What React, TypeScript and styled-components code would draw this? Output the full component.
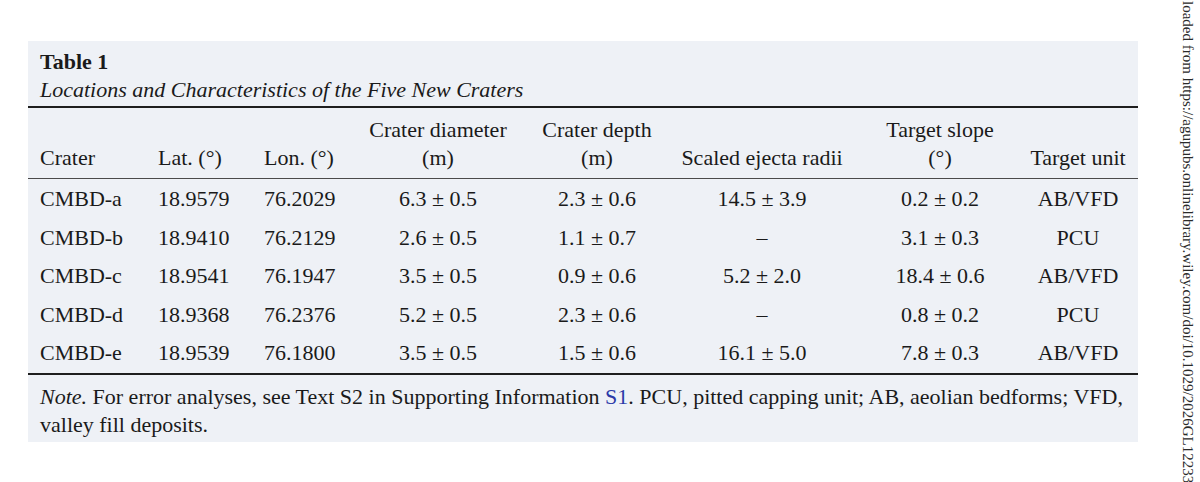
import React from 'react';
import styled, { createGlobalStyle } from 'styled-components';

const GlobalStyle = createGlobalStyle`
  html, body { margin: 0; padding: 0; background: #ffffff; }
  body {
    width: 1200px;
    height: 482px;
    overflow: hidden;
    font-family: "Liberation Serif", "Times New Roman", serif;
    color: #1a1a1a;
  }
`;

const Page = styled.div`
  position: relative;
  width: 1200px;
  height: 482px;
  box-sizing: border-box;
  padding: 41px 0 0 28px;
  overflow: hidden;
`;

const Panel = styled.section`
  width: 1110px;
  box-sizing: border-box;
  background: #eef1f6;
  padding: 7px 0 3px;
  font-size: 22px;
`;

const TitleBlock = styled.header`
  padding: 0 12px 2px;
  line-height: 28px;
  border-bottom: 2.5px solid #1e1e1e;
`;

const TableLabel = styled.div`
  font-weight: bold;
`;

const Caption = styled.div`
  font-style: italic;
`;

const COLS = '118px 106px 96px 156px 162px 168px 188px 88px';

const HeaderRow = styled.div`
  display: grid;
  grid-template-columns: ${COLS};
  align-items: end;
  padding: 8px 16px 6px 12px;
  line-height: 28px;
  border-bottom: 1.5px solid #4a4a4a;
`;

const Body = styled.div`
  padding-top: 1px;
  border-bottom: 2px solid #1e1e1e;
`;

const BodyRow = styled.div`
  display: grid;
  grid-template-columns: ${COLS};
  padding: 0 16px 0 12px;
  line-height: 38.5px;
`;

const Cell = styled.div<{ $center?: boolean }>`
  display: flex;
  flex-direction: column;
  align-items: ${(p) => (p.$center ? 'center' : 'flex-start')};
  text-align: ${(p) => (p.$center ? 'center' : 'left')};
  white-space: nowrap;
`;

const Note = styled.p`
  margin: 0;
  padding: 8px 0 0 12px;
  line-height: 28px;
  white-space: nowrap;
`;

const Em = styled.em`
  font-style: italic;
`;

const Link = styled.span`
  color: #2b3aa8;
`;

const SideNote = styled.div`
  position: absolute;
  top: 1px;
  left: 1179px;
  writing-mode: vertical-rl;
  font-family: "Liberation Serif", "Times New Roman", serif;
  font-size: 15px;
  line-height: 17px;
  color: #2a2a2a;
  white-space: nowrap;
`;

type Row = [string, string, string, string, string, string, string, string];

const rows: Row[] = [
  ['CMBD-a', '18.9579', '76.2029', '6.3 ± 0.5', '2.3 ± 0.6', '14.5 ± 3.9', '0.2 ± 0.2', 'AB/VFD'],
  ['CMBD-b', '18.9410', '76.2129', '2.6 ± 0.5', '1.1 ± 0.7', '–', '3.1 ± 0.3', 'PCU'],
  ['CMBD-c', '18.9541', '76.1947', '3.5 ± 0.5', '0.9 ± 0.6', '5.2 ± 2.0', '18.4 ± 0.6', 'AB/VFD'],
  ['CMBD-d', '18.9368', '76.2376', '5.2 ± 0.5', '2.3 ± 0.6', '–', '0.8 ± 0.2', 'PCU'],
  ['CMBD-e', '18.9539', '76.1800', '3.5 ± 0.5', '1.5 ± 0.6', '16.1 ± 5.0', '7.8 ± 0.3', 'AB/VFD'],
];

const headers: { lines: string[]; center: boolean }[] = [
  { lines: ['Crater'], center: false },
  { lines: ['Lat. (°)'], center: false },
  { lines: ['Lon. (°)'], center: false },
  { lines: ['Crater diameter', '(m)'], center: true },
  { lines: ['Crater depth', '(m)'], center: true },
  { lines: ['Scaled ejecta radii'], center: true },
  { lines: ['Target slope', '(°)'], center: true },
  { lines: ['Target unit'], center: true },
];

export default function App() {
  return (
    <>
      <GlobalStyle />
      <Page>
        <Panel>
          <TitleBlock>
            <TableLabel>Table 1</TableLabel>
            <Caption>Locations and Characteristics of the Five New Craters</Caption>
          </TitleBlock>
          <HeaderRow>
            {headers.map((h, i) => (
              <Cell key={i} $center={h.center}>
                {h.lines.map((l, j) => (
                  <span key={j}>{l}</span>
                ))}
              </Cell>
            ))}
          </HeaderRow>
          <Body>
            {rows.map((r) => (
              <BodyRow key={r[0]}>
                {r.map((v, i) => (
                  <Cell key={i} $center={i >= 3}>
                    {v}
                  </Cell>
                ))}
              </BodyRow>
            ))}
          </Body>
          <Note>
            <Em>Note.</Em> For error analyses, see Text S2 in Supporting Information <Link>S1</Link>. PCU, pitted
            capping unit; AB, aeolian bedforms; VFD,
            <br />
            valley fill deposits.
          </Note>
        </Panel>
        <SideNote>loaded from https://agupubs.onlinelibrary.wiley.com/doi/10.1029/2026GL12233</SideNote>
      </Page>
    </>
  );
}
